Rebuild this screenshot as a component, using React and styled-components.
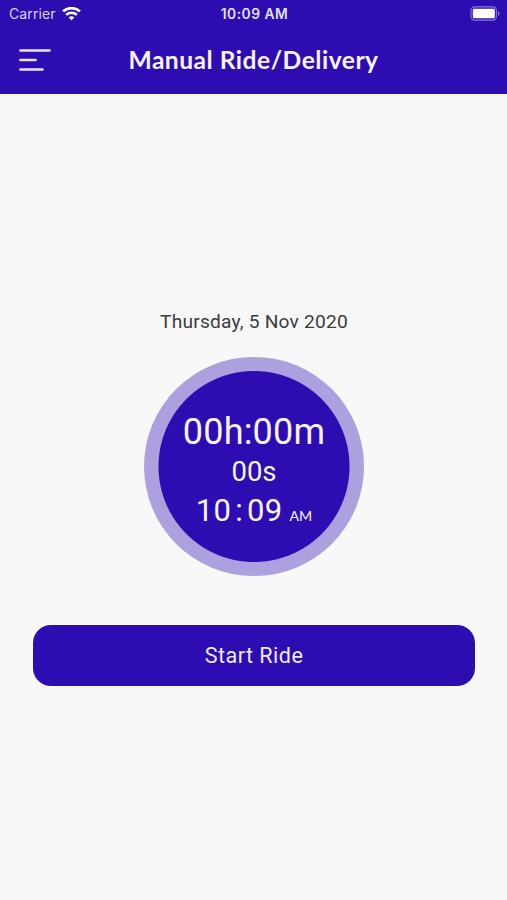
import styled, { createGlobalStyle } from "styled-components";

const GlobalStyle = createGlobalStyle`
  body {
    margin: 0;
    background-color: #f8f8f8;
  }
`;

//layout
const Container = styled.div`
  height: 900px;
  background-color: #f8f8f8;
  font-family: Roboto, "Liberation Sans", sans-serif;
`;

const Header = styled.header`
  height: 93.5px;
  box-sizing: border-box;
  background-color: #2d0cb1;
  color: #f7f4ff;
`;

//status bar
const StatusBar = styled.div`
  height: 27px;
  padding: 0 7px 0 9px;
  display: grid;
  grid-template-columns: 1fr auto 1fr;
  align-items: center;
  font-family: Inter, "Liberation Sans", sans-serif;
  font-size: 14px;
`;

const Carrier = styled.div`
  display: flex;
  align-items: center;
  gap: 6px;
  letter-spacing: 0.1px;
  color: #dcd4f6;
`;

const Clock = styled.span`
  font-size: 13.8px;
  font-weight: 600;
  letter-spacing: 0.5px;
  color: #e6e0fa;
`;

const Battery = styled.svg`
  justify-self: end;
`;

//nav
const NavBar = styled.div`
  height: 65px;
  padding: 0 19px;
  display: grid;
  grid-template-columns: 32px 1fr 32px;
  align-items: center;
`;

const MenuButton = styled.button`
  padding: 0;
  border: none;
  background: none;
  display: flex;
  cursor: pointer;
`;

const Title = styled.h1`
  margin: 0;
  font-family: Lato, "Liberation Sans", sans-serif;
  font-size: 24.6px;
  line-height: 30px;
  font-weight: 700;
  letter-spacing: 0.5px;
  text-align: center;
  white-space: nowrap;
`;

//content
const Content = styled.main`
  padding: 215px 32px 0 33px;
  display: flex;
  flex-direction: column;
  align-items: center;
`;

const DateText = styled.p`
  margin: 0 0 22px;
  font-size: 19.2px;
  line-height: 26px;
  letter-spacing: 0.2px;
  color: #3c3c3e;
`;

const Timer = styled.div`
  width: 220px;
  height: 219.5px;
  box-sizing: border-box;
  border-radius: 50%;
  background: radial-gradient(circle at center, #2d0cb1 95px, #aca0df 96px);
  color: #f7f4ff;
  display: flex;
  flex-direction: column;
  align-items: center;
  padding-top: 54px;
`;

const TimerLine = styled.div`
  font-size: ${(props) => props.$size}px;
  line-height: ${(props) => props.$height}px;
  letter-spacing: ${(props) => props.$spacing || 0}px;
  white-space: nowrap;
`;

const Colon = styled.span`
  margin: 0 4px 0 4px;
`;

const Period = styled.span`
  margin-left: 7px;
  font-family: Lato, "Liberation Sans", sans-serif;
  font-size: 14.2px;
  letter-spacing: 0;
`;

const StartButton = styled.button`
  width: 100%;
  height: 61px;
  margin-top: 49px;
  padding: 0;
  border: none;
  border-radius: 18px;
  background-color: #2d0cb1;
  color: #efeafc;
  font-family: inherit;
  font-size: 21.6px;
  letter-spacing: 0.45px;
  cursor: pointer;
`;

const WifiIcon = () => (
  <svg width="19" height="14" viewBox="0 0 18 14" preserveAspectRatio="none" fill="none" stroke="#fff" strokeWidth="2.6">
    <path d="M1 4.4a11.4 11.4 0 0 1 16 0" />
    <path d="M4 7.8a7.1 7.1 0 0 1 10 0" />
    <path d="M9 13.2 6.3 10.6a3.8 3.8 0 0 1 5.4 0Z" fill="#fff" stroke="none" />
  </svg>
);

const BatteryIcon = () => (
  <Battery width="30" height="15" viewBox="0 0 30 15" fill="none">
    <rect x="1" y="0.9" width="25.4" height="13.2" rx="3.6" stroke="#8d7ad6" strokeWidth="1.1" />
    <rect x="2.8" y="2.8" width="22" height="9.4" rx="1.2" fill="#fff" />
    <path d="M28 5.2c2.1.9 2.1 3.7 0 4.6Z" fill="#8d7ad6" />
  </Battery>
);

const MenuIcon = () => (
  <svg width="32" height="24" viewBox="0 0 32 24" stroke="#e9e3fb" strokeWidth="2.6" strokeLinecap="round">
    <path d="M1.5 2.5h29" />
    <path d="M1.5 12h15" />
    <path d="M1.5 21.5h22" />
  </svg>
);

const App = () => {
  return (
    <Container>
      <GlobalStyle />
      <Header>
        <StatusBar>
          <Carrier>
            Carrier <WifiIcon />
          </Carrier>
          <Clock>10:09 AM</Clock>
          <BatteryIcon />
        </StatusBar>
        <NavBar>
          <MenuButton aria-label="Menu">
            <MenuIcon />
          </MenuButton>
          <Title>Manual Ride/Delivery</Title>
        </NavBar>
      </Header>
      <Content>
        <DateText>Thursday, 5 Nov 2020</DateText>
        <Timer>
          <TimerLine $size={36} $height={42} $spacing={0.2}>00h:00m</TimerLine>
          <TimerLine $size={27.5} $height={38}>00s</TimerLine>
          <TimerLine $size={31} $height={39} $spacing={0.3}>
            10<Colon>:</Colon>09<Period>AM</Period>
          </TimerLine>
        </Timer>
        <StartButton>Start Ride</StartButton>
      </Content>
    </Container>
  );
};

export default App;
